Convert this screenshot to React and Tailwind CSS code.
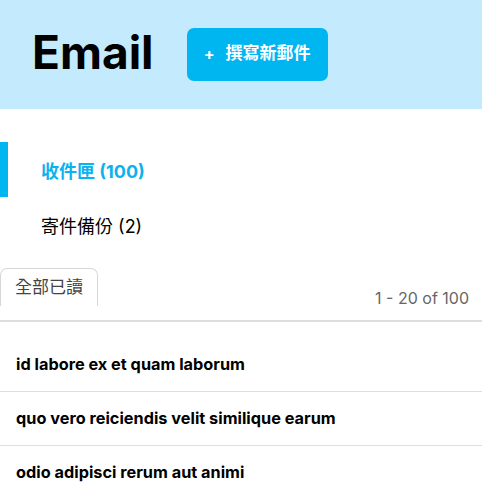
export default function App() {
  const mails = [
    'id labore ex et quam laborum',
    'quo vero reiciendis velit similique earum',
    'odio adipisci rerum aut animi',
  ]

  return (
    <div className="w-[482px] h-[482px] overflow-hidden bg-white font-['Inter','Noto_Sans_CJK_TC',sans-serif]">
      {/* Header */}
      <div className="h-[109px] bg-[#c4ebfd] flex items-center pl-[32px] gap-[33px]">
        <h1 className="text-[46px] font-bold text-black mb-[5px]">Email</h1>
        <button className="h-[53px] w-[141px] rounded-[7px] bg-[#00b6f1] text-white font-bold text-[17px] flex items-center justify-center gap-[11px] mb-[1px]">
          <span className="text-[16px]">+</span>
          <span>撰寫新郵件</span>
        </button>
      </div>

      {/* Folders */}
      <div className="pt-[33px]">
        <div className="h-[55px] flex items-center border-l-[8px] border-[#00b6f1] pl-[33px] pt-[4px] text-[18px] font-bold text-[#0cb2ee]">
          收件匣 (100)
        </div>
        <div className="h-[55px] flex items-center pl-[41px] pt-[4px] text-[18px] text-black">
          寄件備份 (2)
        </div>
      </div>

      {/* Toolbar */}
      <div className="mt-[16px] flex items-end justify-between border-b-2 border-[#dddddd] pr-[13px]">
        <button className="h-[38px] w-[98px] mb-[14px] border border-b-0 border-[#d6d6d6] rounded-t-[7px] text-[17px] text-[#444] flex items-center justify-center">
          全部已讀
        </button>
        <span className="mb-[10px] text-[16px] text-[#666]">1 - 20 of 100</span>
      </div>

      {/* Mail list */}
      <div className="pt-[16px]">
        {mails.map((m) => (
          <div key={m} className="h-[54px] flex items-center px-[16px] border-b border-[#dddddd] text-[16.3px] font-bold text-black">
            {m}
          </div>
        ))}
      </div>
    </div>
  )
}
